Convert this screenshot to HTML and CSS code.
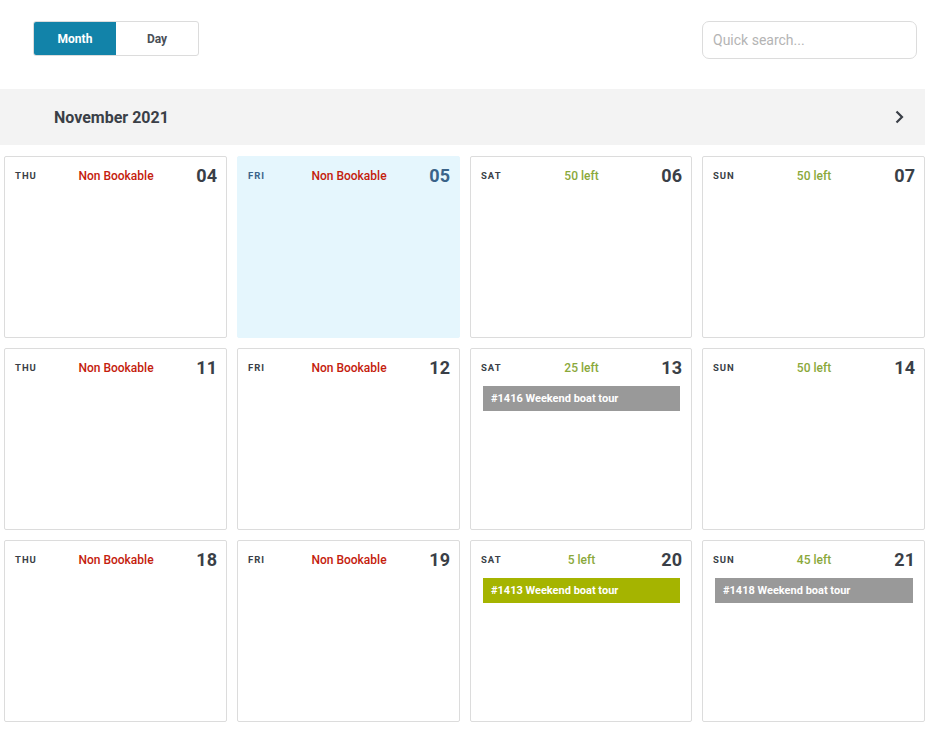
FILE: index.html
```html
<!DOCTYPE html>
<html>
<head>
    <meta charset="utf-8">
    <link rel="stylesheet" href="styles.css">
</head>
<body>
    <div class="toolbar">
        <div class="viewToggle">
            <span class="viewBtn active">Month</span>
            <span class="viewBtn">Day</span>
        </div>
        <input class="search" type="text" placeholder="Quick search...">
    </div>
    <div class="monthBar">
        <span class="monthTitle">November 2021</span>
        <svg class="nextArrow" width="10" height="14" viewBox="0 0 10 14"><path d="M2.5 1.5 L8 7 L2.5 12.5" fill="none" stroke="#3a3f47" stroke-width="2.2"/></svg>
    </div>
    <div class="calendar">
        <div class="dayCell">
            <div class="cellHead"><span class="dow">THU</span><span class="status closed">Non Bookable</span><span class="date">04</span></div>
        </div>
        <div class="dayCell today">
            <div class="cellHead"><span class="dow">FRI</span><span class="status closed">Non Bookable</span><span class="date">05</span></div>
        </div>
        <div class="dayCell">
            <div class="cellHead"><span class="dow">SAT</span><span class="status open">50 left</span><span class="date">06</span></div>
        </div>
        <div class="dayCell">
            <div class="cellHead"><span class="dow">SUN</span><span class="status open">50 left</span><span class="date">07</span></div>
        </div>

        <div class="dayCell">
            <div class="cellHead"><span class="dow">THU</span><span class="status closed">Non Bookable</span><span class="date">11</span></div>
        </div>
        <div class="dayCell">
            <div class="cellHead"><span class="dow">FRI</span><span class="status closed">Non Bookable</span><span class="date">12</span></div>
        </div>
        <div class="dayCell">
            <div class="cellHead"><span class="dow">SAT</span><span class="status open">25 left</span><span class="date">13</span></div>
            <div class="event grey">#1416 Weekend boat tour</div>
        </div>
        <div class="dayCell">
            <div class="cellHead"><span class="dow">SUN</span><span class="status open">50 left</span><span class="date">14</span></div>
        </div>

        <div class="dayCell">
            <div class="cellHead"><span class="dow">THU</span><span class="status closed">Non Bookable</span><span class="date">18</span></div>
        </div>
        <div class="dayCell">
            <div class="cellHead"><span class="dow">FRI</span><span class="status closed">Non Bookable</span><span class="date">19</span></div>
        </div>
        <div class="dayCell">
            <div class="cellHead"><span class="dow">SAT</span><span class="status open">5 left</span><span class="date">20</span></div>
            <div class="event olive">#1413 Weekend boat tour</div>
        </div>
        <div class="dayCell">
            <div class="cellHead"><span class="dow">SUN</span><span class="status open">45 left</span><span class="date">21</span></div>
            <div class="event grey">#1418 Weekend boat tour</div>
        </div>
    </div>
</body>
</html>
```
FILE: styles.css
```css
body {
    margin: 0;
    font-family: Roboto, "Liberation Sans", sans-serif;
    color: #3a3f47;
    background: #fff;
}
.toolbar {
    display: flex;
    justify-content: space-between;
    align-items: flex-start;
    padding: 21px 14px 0 33px;
    height: 68px;
    width: 884px;
}
.viewToggle {
    display: flex;
    border: 1px solid #dcdcdc;
    border-radius: 3px;
    overflow: hidden;
    height: 33px;
}
.viewBtn {
    width: 82px;
    display: flex;
    align-items: center;
    justify-content: center;
    font-size: 12px;
    font-weight: 700;
    color: #4a4f57;
}
.viewBtn.active {
    background: #1283a9;
    color: #fff;
}
.search {
    box-sizing: border-box;
    width: 215px;
    height: 38px;
    border: 1px solid #dcdcdc;
    border-radius: 7px;
    padding: 0 10px;
    font-family: inherit;
    font-size: 14px;
    outline: none;
}
.search::placeholder {
    color: #b4b4b4;
}
.monthBar {
    display: flex;
    align-items: center;
    justify-content: space-between;
    width: 925px;
    height: 56px;
    box-sizing: border-box;
    background: #f3f3f3;
    padding: 0 21px 0 54px;
}
.monthTitle {
    font-size: 16px;
    font-weight: 700;
}
.calendar {
    display: grid;
    grid-template-columns: 223px 223px 222px 223px;
    grid-auto-rows: 182px;
    gap: 10px;
    padding: 11px 0 0 4px;
}
.dayCell {
    box-sizing: border-box;
    border: 1px solid #dcdcdc;
    border-radius: 2px;
    padding: 0 9px 0 10px;
    background: #fff;
}
.dayCell.today {
    background: #e5f6fd;
    border-color: #e5f6fd;
}
.cellHead {
    display: grid;
    grid-template-columns: 1fr auto 1fr;
    align-items: center;
    height: 37px;
}
.dow {
    font-size: 9.5px;
    font-weight: 700;
    letter-spacing: 1px;
    color: #3a3f47;
}
.status {
    font-size: 12px;
    font-weight: 500;
}
.status.closed { color: #c4200c; }
.status.open { color: #8aa83a; }
.date {
    justify-self: end;
    font-size: 18px;
    font-weight: 700;
}
.today .dow,
.today .date {
    color: #3a6389;
}
.event {
    height: 25px;
    line-height: 25px;
    margin: 0 2px 0 2px;
    padding-left: 8px;
    font-size: 11px;
    font-weight: 700;
    color: #fff;
}
.event.grey { background: #999; }
.event.olive { background: #a5b400; }
```
